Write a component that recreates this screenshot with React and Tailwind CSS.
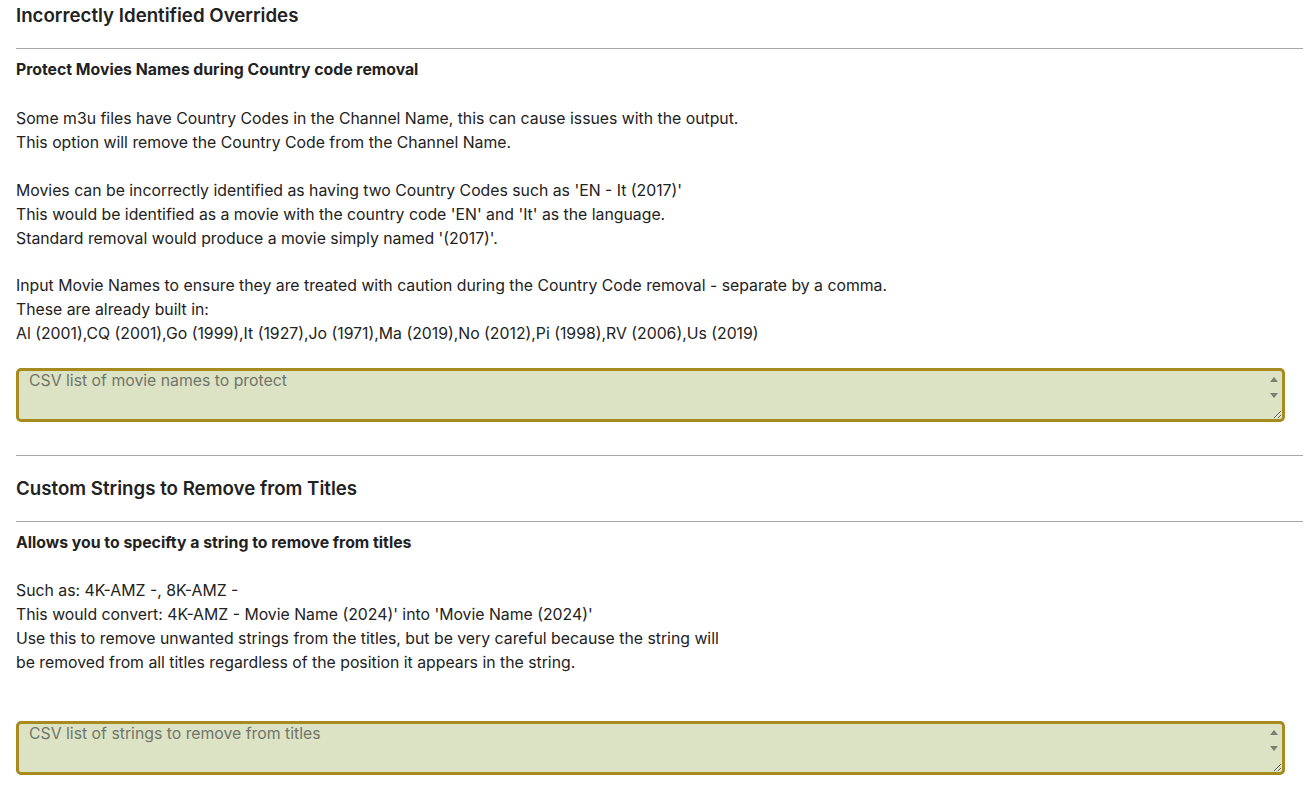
import React from "react";

function Area({ placeholder }) {
  return (
    <div className="relative w-[1269px]">
      <textarea
        rows={2}
        placeholder={placeholder}
        className="block w-[1269px] h-[54px] rounded-[5px] border-[3px] border-[#a78b1f] bg-[#dce2c4] px-[10px] pt-0 text-[15.8px] leading-[20px] text-[#222] placeholder:text-[#70756a] outline-none resize-y"
        style={{ fontFamily: "Inter, 'Noto Sans', sans-serif" }}
      />
      <div className="pointer-events-none absolute right-[7px] top-[9px] flex flex-col items-center gap-[11px]">
        <div className="h-0 w-0 border-x-[4px] border-b-[5px] border-x-transparent border-b-[#7a7e74]" />
        <div className="h-0 w-0 border-x-[4px] border-t-[5px] border-x-transparent border-t-[#7a7e74]" />
      </div>
    </div>
  );
}

export default function App() {
  return (
    <div
      className="bg-white text-[#222] pl-[16px] pr-[11px] pt-[3px] min-h-[791px]"
      style={{ fontFamily: "Inter, 'Noto Sans', sans-serif" }}
    >
      <h2 className="text-[18.7px] font-semibold leading-[26px]">Incorrectly Identified Overrides</h2>
      <hr className="mt-[19px] border-0 border-t border-[#a6a6a6]" />
      <h3 className="mt-[11px] text-[15.8px] font-bold leading-[20px]">Protect Movies Names during Country code removal</h3>
      <div className="mt-[27px] text-[15.8px] leading-[24px]">
        <p>
          Some m3u files have Country Codes in the Channel Name, this can cause issues with the output.
          <br />
          This option will remove the Country Code from the Channel Name.
        </p>
        <p className="mt-[24px]">
          Movies can be incorrectly identified as having two Country Codes such as 'EN - It (2017)'
          <br />
          This would be identified as a movie with the country code 'EN' and 'It' as the language.
          <br />
          Standard removal would produce a movie simply named '(2017)'.
        </p>
        <p className="mt-[23px]">
          Input Movie Names to ensure they are treated with caution during the Country Code removal - separate by a comma.
          <br />
          These are already built in:
          <br />
          Al (2001),CQ (2001),Go (1999),It (1927),Jo (1971),Ma (2019),No (2012),Pi (1998),RV (2006),Us (2019)
        </p>
      </div>
      <div className="mt-[22px]">
        <Area placeholder="CSV list of movie names to protect" />
      </div>
      <hr className="mt-[33px] border-0 border-t border-[#a6a6a6]" />
      <h2 className="mt-[20px] text-[18.7px] font-semibold leading-[26px]">Custom Strings to Remove from Titles</h2>
      <hr className="mt-[19px] border-0 border-t border-[#a6a6a6]" />
      <h3 className="mt-[11px] text-[15.8px] font-bold leading-[20px]">Allows you to specifty a string to remove from titles</h3>
      <div className="mt-[26px] text-[15.8px] leading-[24px]">
        <p>
          Such as: 4K-AMZ -, 8K-AMZ -
          <br />
          This would convert: 4K-AMZ - Movie Name (2024)' into 'Movie Name (2024)'
          <br />
          Use this to remove unwanted strings from the titles, but be very careful because the string will
          <br />
          be removed from all titles regardless of the position it appears in the string.
        </p>
      </div>
      <div className="mt-[46px]">
        <Area placeholder="CSV list of strings to remove from titles" />
      </div>
    </div>
  );
}
